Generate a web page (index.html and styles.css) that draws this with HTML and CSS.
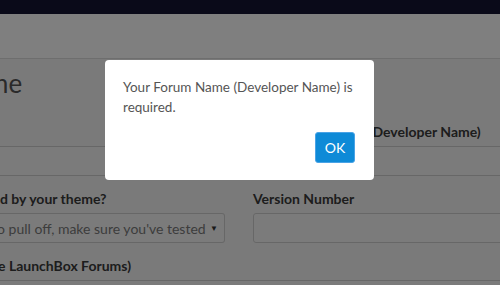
FILE: index.html
```html
<!DOCTYPE html>
<html>
<head>
<meta charset="utf-8">
<link rel="stylesheet" href="styles.css">
</head>
<body>
<div class="topbar"></div>
<div class="header"></div>
<main class="page">
  <h1 class="title"><span class="clip-m">me</span></h1>
  <div class="form">
    <div class="field">
      <label class="label">&nbsp;</label>
      <div class="input"></div>
    </div>
    <div class="field">
      <label class="label">Your Forum Name (Developer Name)</label>
      <div class="input"></div>
    </div>
    <div class="field">
      <label class="label">d by your theme?</label>
      <div class="input select"><span class="select-text"><span class="clip-o">o</span> pull off, make sure you've tested</span><span class="caret">&#9660;</span></div>
    </div>
    <div class="field">
      <label class="label">Version Number</label>
      <div class="input"></div>
    </div>
    <div class="field wide">
      <label class="label"><span class="clip-e">e</span> LaunchBox Forums)</label>
      <div class="input"></div>
    </div>
  </div>
</main>
<div class="overlay"></div>
<div class="modal">
  <p class="modal-text">Your Forum Name (Developer Name) is required.</p>
  <div class="modal-actions">
    <button class="btn-ok">OK</button>
  </div>
</div>
</body>
</html>
```

FILE: styles.css
```css
html, body {
  margin: 0;
  padding: 0;
}
body {
  width: 500px;
  height: 285px;
  overflow: hidden;
  font-family: Lato, "Open Sans", sans-serif;
  background: #f5f5f5;
}
.topbar {
  height: 14px;
  background: #141432;
}
.header {
  height: 44px;
  background: #ffffff;
  border-bottom: 1px solid #dcdcdc;
}
.page {
  background: #f5f5f5;
}
.title {
  margin: 0;
  padding-top: 10px;
  font-size: 26px;
  line-height: 29px;
  font-weight: 400;
  color: #555;
  white-space: nowrap;
  overflow: hidden;
}
.clip-m {
  margin-left: -13px;
}
.form {
  margin-top: 24px;
  display: grid;
  grid-template-columns: 225px 300px;
  column-gap: 28px;
  row-gap: 13px;
}
.field {
  min-width: 0;
}
.field.wide {
  grid-column: 1 / 3;
}
.label {
  display: block;
  font-size: 14px;
  line-height: 20px;
  font-weight: 700;
  color: #3a3a3a;
  margin-bottom: 4px;
  white-space: nowrap;
}
.input {
  height: 28px;
  border: 1px solid #cfcfcf;
  border-radius: 3px;
  background: #f7f7f7;
  box-sizing: content-box;
}
.field:nth-child(odd) .input {
  border-left: none;
  border-top-left-radius: 0;
  border-bottom-left-radius: 0;
}
.select {
  display: flex;
  align-items: center;
  justify-content: space-between;
  padding-right: 6px;
}
.select-text {
  font-size: 14px;
  color: #7a7a7a;
  white-space: nowrap;
  overflow: hidden;
}
.clip-o {
  margin-left: -3px;
}
.clip-e {
  margin-left: -2px;
}
.caret {
  font-size: 8px;
  color: #333;
}
.overlay {
  position: fixed;
  inset: 0;
  background: rgba(0, 0, 0, 0.5);
}
.modal {
  position: fixed;
  left: 105px;
  top: 60px;
  width: 269px;
  height: 120px;
  box-sizing: border-box;
  background: #fff;
  border-radius: 4px;
  padding: 17px 10px 17px 18px;
  display: flex;
  flex-direction: column;
}
.modal-text {
  margin: 0;
  font-size: 13.5px;
  line-height: 20px;
  color: #555;
}
.modal-actions {
  margin-top: auto;
  display: flex;
  justify-content: flex-end;
  padding-right: 9px;
}
.btn-ok {
  width: 40px;
  height: 31px;
  padding: 0;
  border: 1px solid #4aa3e6;
  border-radius: 3px;
  background: #0e8ad7;
  color: #fff;
  font-family: Lato, "Open Sans", sans-serif;
  font-size: 14px;
}
```
